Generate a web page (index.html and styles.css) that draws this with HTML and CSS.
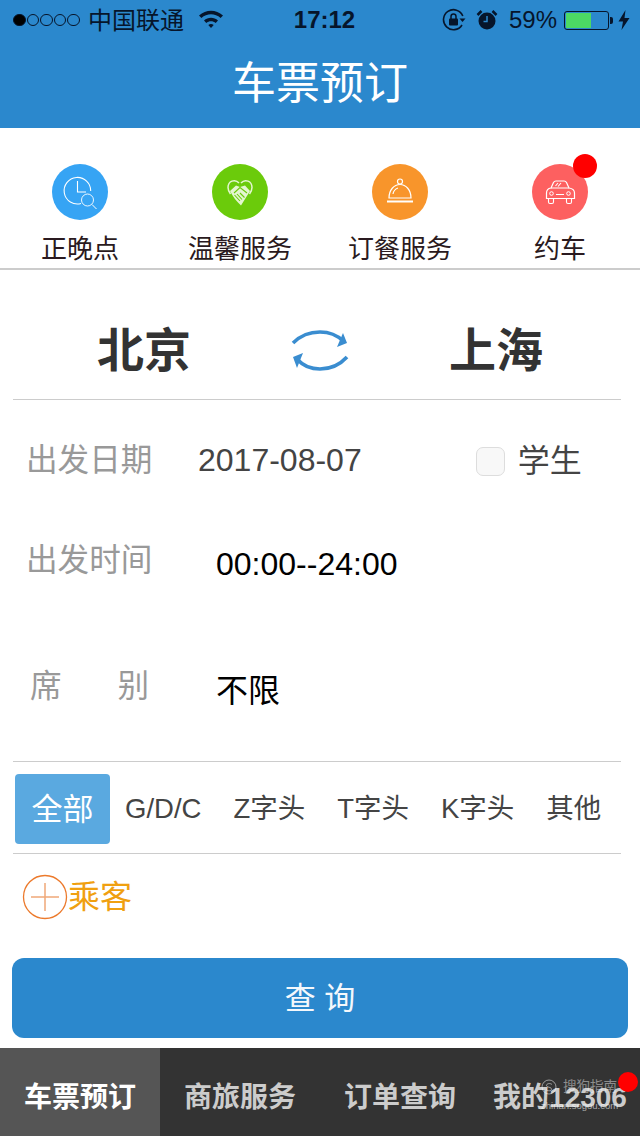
FILE: index.html
```html
<!DOCTYPE html>
<html lang="zh-CN">
  <head>
    <meta charset="UTF-8" />
    <title>车票预订</title>
    <link rel="stylesheet" href="styles.css">
  </head>
  <body>
    <div class="page">
      <header class="topbar">
        <div class="status">
          <div class="status-left">
            <span class="signal"><i class="on"></i><i></i><i></i><i></i><i></i></span>
            <span class="carrier">中国联通</span>
            <svg class="wifi" width="26" height="20" viewBox="0 0 26 20">
              <path d="M1 6.5C8 0 18 0 25 6.500L22.600 9C17 4 9 4 3.400 9Z" fill="#06152b"/>
              <path d="M6 11.500C10 7.800 16 7.800 20 11.500L17.700 14C15 11.600 11 11.600 8.300 14Z" fill="#06152b"/>
              <path d="M10.300 16C12 14.500 14 14.500 15.700 16L13 19Z" fill="#06152b"/>
            </svg>
          </div>
          <div class="time">17:12</div>
          <div class="status-right">
            <svg class="lock" width="24" height="24" viewBox="0 0 24 24">
              <path d="M20 17A10 10 0 1 1 20.800 8" fill="none" stroke="#06152b" stroke-width="1.600"/>
              <path d="M17.500 10.500h6l-3 3.500z" fill="#06152b"/>
              <rect x="7" y="10.500" width="9" height="7" rx="1" fill="#06152b"/>
              <path d="M9 11V8.500a2.500 2.500 0 0 1 5 0V11" fill="none" stroke="#06152b" stroke-width="1.500"/>
            </svg>
            <svg class="alarm" width="22" height="22" viewBox="0 0 22 22">
              <circle cx="11" cy="12" r="8.500" fill="#06152b"/>
              <path d="M1.500 6L5.500 2M20.500 6L16.500 2" stroke="#06152b" stroke-width="2.500"/>
              <path d="M11 7V12.500H7.500" fill="none" stroke="#2b88cd" stroke-width="1.500"/>
            </svg>
            <span class="percent">59%</span>
            <span class="battery"><span class="battery-level"></span></span>
            <span class="battery-tip"></span>
            <svg class="bolt" width="12" height="20" viewBox="0 0 12 20">
              <path d="M7.500 0L0.500 11.500H5L3.500 20L11.500 8H6.500Z" fill="#06152b"/>
            </svg>
          </div>
        </div>
        <h1 class="title">车票预订</h1>
      </header>

      <nav class="services">
        <a class="service">
          <svg class="service-icon" width="56" height="56" viewBox="0 0 56 56">
            <circle cx="28" cy="28" r="28" fill="#36a4f4"/>
            <path d="M29 39.500A13.300 13.300 0 1 1 38.700 27" fill="none" stroke="#fff" stroke-width="1.100"/>
            <path d="M25.500 17V28H34" fill="none" stroke="#fff" stroke-width="1.100"/>
            <circle cx="35.500" cy="36" r="6" fill="none" stroke="#fff" stroke-width=".9"/>
            <path d="M40 40.500L44.500 45" stroke="#fff" stroke-width="1"/>
          </svg>
          <span>正晚点</span>
        </a>
        <a class="service">
          <svg class="service-icon" width="56" height="56" viewBox="0 0 56 56">
            <circle cx="28" cy="28" r="28" fill="#6bcb0b"/>
            <path d="M27 19C23 14.500 16 17 16 23.500C16 26 17 28 18.500 30" fill="none" stroke="#e4f6d0" stroke-width="1.500"/>
            <path d="M29 19C33 14.500 40 17 40 23.500C40 26 39 28 37.500 30" fill="none" stroke="#e4f6d0" stroke-width="1.500"/>
            <path d="M18 27L24 21.500L28 23L33 21.500L38 27L29 41.500C25 38 21 33 18 27Z" fill="#e4f6d0"/>
            <path d="M22 29L28 23.500L35 29M22.500 31L28 37M25 30L30 35.500M28 29L32.500 33.500" fill="none" stroke="#6bcb0b" stroke-width="1.100"/>
          </svg>
          <span>温馨服务</span>
        </a>
        <a class="service">
          <svg class="service-icon" width="56" height="56" viewBox="0 0 56 56">
            <circle cx="28" cy="28" r="28" fill="#f8952b"/>
            <circle cx="28" cy="17.500" r="2.500" fill="none" stroke="#fff" stroke-width="1.200"/>
            <path d="M17 34C17 26 22 20.500 28 20.500C34 20.500 39 26 39 34Z" fill="none" stroke="#fff" stroke-width="1.200"/>
            <path d="M21 30C21.500 27 23 25 26 24" fill="none" stroke="#fff" stroke-width="1.200"/>
            <path d="M15 37.500H41" stroke="#fff" stroke-width="2"/>
          </svg>
          <span>订餐服务</span>
        </a>
        <a class="service">
          <span class="badge-wrap">
            <svg class="service-icon" width="56" height="56" viewBox="0 0 56 56">
              <circle cx="28" cy="28" r="28" fill="#fd6060"/>
              <path d="M19 24L21.500 18.500C22 17.500 23 17 24 17H32C33 17 34 17.500 34.500 18.500L37 24C40.500 24.500 42.500 26.500 42.500 29V34.500H14.500V29C14.500 26.500 15.500 24.500 19 24Z" fill="none" stroke="#fff" stroke-width="1.200"/>
              <path d="M19 24H37M16.500 35V38C16.500 39 17 39.500 18 39.500H20C21 39.500 21.500 39 21.500 38V35M34.500 35V38C34.500 39 35 39.500 36 39.500H38C39 39.500 39.500 39 39.500 38V35M24 30.500H32M23.500 22L26 19M26 22.500L29 19" fill="none" stroke="#fff" stroke-width="1.100"/>
              <circle cx="19.500" cy="29.500" r="1.800" fill="none" stroke="#fff" stroke-width="1"/>
              <circle cx="36.500" cy="29.500" r="1.800" fill="none" stroke="#fff" stroke-width="1"/>
            </svg>
            <i class="dot dot-service"></i>
          </span>
          <span>约车</span>
        </a>
      </nav>

      <section class="booking">
        <div class="cities">
          <span class="city">北京</span>
          <svg class="swap" width="60" height="44" viewBox="0 0 60 44">
            <path d="M3 14Q14 3 30 3Q44 3 53 12" fill="none" stroke="#3a8dd0" stroke-width="3.600"/>
            <path d="M53 4L57 14L47 18Z" fill="#3a8dd0"/>
            <path d="M57 28Q46 40 30 40Q16 40 8 31" fill="none" stroke="#3a8dd0" stroke-width="3.600"/>
            <path d="M3 28L13 24L7 39Z" fill="#3a8dd0"/>
          </svg>
          <span class="city">上海</span>
        </div>

        <div class="form-row row-date">
          <span class="label">出发日期</span>
          <span class="date">2017-08-07</span>
          <label class="student"><i class="checkbox"></i><span>学生</span></label>
        </div>
        <div class="form-row row-time">
          <span class="label">出发时间</span>
          <span class="value">00:00--24:00</span>
        </div>
        <div class="form-row row-seat">
          <span class="label label-seat"><b>席</b><b>别</b></span>
          <span class="value value-seat">不限</span>
        </div>

        <div class="trains">
          <span class="train active">全部</span>
          <span class="train">G/D/C</span>
          <span class="train">Z字头</span>
          <span class="train">T字头</span>
          <span class="train">K字头</span>
          <span class="train">其他</span>
        </div>

        <div class="passenger">
          <svg width="46" height="46" viewBox="0 0 46 46">
            <circle cx="23" cy="23" r="21.500" fill="none" stroke="#ec7a2c" stroke-width="1.300"/>
            <path d="M9 23H37M23 9V37" stroke="#f0a878" stroke-width="1.500"/>
          </svg>
          <span>乘客</span>
        </div>

        <button class="search">查 询</button>
      </section>

      <footer class="tabbar">
        <a class="tab current">车票预订</a>
        <a class="tab">商旅服务</a>
        <a class="tab">订单查询</a>
        <a class="tab">我的12306</a>
        <i class="dot dot-tab"></i>
        <div class="watermark">
          <svg width="16" height="16" viewBox="0 0 16 16">
            <circle cx="8" cy="8" r="7" fill="none" stroke="#fff" stroke-opacity=".5"/>
            <path d="M11 5.500C9 3.800 5.500 4.500 5.500 6.500C5.500 9 10.500 7.500 10.500 10C10.500 12 7 12.500 5 10.500" fill="none" stroke="#fff" stroke-opacity=".5"/>
          </svg>
          <span class="wm-name">搜狗指南</span>
          <small class="wm-url">zhinan.sogou.com</small>
        </div>
      </footer>
    </div>
  </body>
</html>
```

FILE: styles.css
```css
* {
  box-sizing: border-box;
}
body {
  margin: 0;
  font-family: "Liberation Sans", "Noto Sans CJK SC", sans-serif;
  background-color: #fff;
}
.page {
  width: 640px;
  height: 1136px;
  overflow: hidden;
  display: flex;
  flex-direction: column;
}
.topbar {
  height: 128px;
  background-color: #2b88cd;
}
.status {
  height: 40px;
  padding: 0 10px 0 13px;
  display: flex;
  align-items: center;
  justify-content: space-between;
  position: relative;
  font-size: 24px;
  color: #06152b;
}
.status-left,
.status-right {
  display: flex;
  align-items: center;
}
.signal {
  display: flex;
  gap: 1px;
  margin-right: 8px;
}
.signal i {
  width: 12.600px;
  height: 12.600px;
  border: 1px solid #06152b;
  border-radius: 50%;
}
.signal i.on {
  background-color: #000;
}
.carrier {
  margin-top: -4px;
}
.wifi {
  margin-left: 14px;
  margin-top: -2px;
}
.time {
  position: absolute;
  left: 9px;
  right: 0;
  text-align: center;
  font-weight: 700;
}
.lock {
  margin-right: 10px;
}
.alarm {
  margin-right: 11px;
}
.percent {
  margin-right: 7px;
}
.battery {
  width: 45px;
  height: 19px;
  border: 1px solid #06152b;
  border-radius: 3px;
  padding: 1px;
}
.battery-level {
  display: block;
  width: 25px;
  height: 100%;
  background-color: #4cd964;
}
.battery-tip {
  width: 3px;
  height: 7px;
  margin-left: 1px;
  background-color: #06152b;
  border-radius: 0 2px 2px 0;
}
.bolt {
  margin-left: 5px;
}
.title {
  margin: 0;
  height: 88px;
  line-height: 87px;
  text-align: center;
  font-size: 44px;
  font-weight: 400;
  color: #fff;
}
.services {
  height: 142px;
  padding-top: 36px;
  display: grid;
  grid-template-columns: repeat(4, 160px);
  border-bottom: 2px solid #ccc;
}
.service {
  display: flex;
  flex-direction: column;
  align-items: center;
  font-size: 26px;
  line-height: 34px;
  color: #2a1a20;
}
.service-icon {
  display: block;
  margin-bottom: 12px;
}
.badge-wrap {
  position: relative;
}
.dot {
  position: absolute;
  border-radius: 50%;
  background-color: #f00;
}
.dot-service {
  width: 24px;
  height: 24px;
  top: -10px;
  right: -9px;
}
.booking {
  flex: 1;
  padding: 0 19px 0 13px;
}
.cities {
  height: 130px;
  padding: 29px 78px 0 84px;
  display: flex;
  align-items: center;
  justify-content: space-between;
  border-bottom: 1px solid #ccc;
}
.city {
  margin-top: -6px;
  font-size: 47px;
  font-weight: 700;
  color: #333;
}
.swap {
  margin-top: 4px;
}
.form-row {
  display: flex;
  align-items: center;
  padding-left: 13px;
  line-height: 40px;
}
.label {
  width: 126px;
  font-size: 31.600px;
  white-space: nowrap;
  color: #999;
  flex-shrink: 0;
}
.row-date {
  height: 120px;
}
.date {
  margin-left: 46px;
  font-size: 32px;
  color: #444;
}
.student {
  display: flex;
  align-items: center;
  margin-left: 114px;
  font-size: 32px;
  color: #444;
}
.checkbox {
  width: 29px;
  height: 29px;
  margin: 2px 13px 0 0;
  border: 1px solid #ddd;
  border-radius: 7px;
  background-color: #f8f8f8;
}
.student span {
  margin-top: 2px;
}
.row-time {
  height: 80px;
}
.value {
  margin: 8px 0 0 64px;
  font-size: 32px;
  color: #000;
}
.value-seat {
  margin-top: 8px;
}
.row-seat {
  height: 80px;
  margin-top: 47px;
}
.label-seat {
  display: flex;
  justify-content: space-between;
  padding: 0 3px 0 4px;
  margin-top: -2px;
}
.label-seat b {
  font-weight: 400;
}
.trains {
  margin-top: 34px;
  height: 93px;
  padding-left: 2px;
  display: flex;
  align-items: center;
  border-top: 1px solid #ccc;
  border-bottom: 1px solid #ccc;
  font-size: 27.500px;
  line-height: 40px;
  color: #444;
}
.train {
  flex-shrink: 0;
  margin: 2px 32px 0 0;
}
.train.active {
  width: 95px;
  height: 70px;
  line-height: 72px;
  margin: 2px 15px 0 0;
  text-align: center;
  font-size: 31px;
  color: #fff;
  background-color: #5aa9e0;
  border-radius: 4px;
}
.passenger {
  height: 86px;
  padding: 0 0 0 9px;
  display: flex;
  align-items: center;
  font-size: 32px;
  line-height: 40px;
  color: #f0a010;
}
.search {
  display: block;
  width: 616px;
  height: 80px;
  margin: 18px 0 0 -1px;
  padding-bottom: 6px;
  border: none;
  border-radius: 12px;
  background-color: #2b88cd;
  color: #f4f8fc;
  font-family: inherit;
  font-size: 31px;
}
.tabbar {
  height: 88px;
  position: relative;
  display: grid;
  grid-template-columns: repeat(4, 160px);
  background-color: #333;
}
.tab {
  line-height: 100px;
  text-align: center;
  white-space: nowrap;
  font-size: 28px;
  font-weight: 700;
  color: #ccc;
}
.tab.current {
  background-color: #555;
  color: #fff;
}
.dot-tab {
  width: 20px;
  height: 20px;
  top: 24px;
  right: 2px;
}
.watermark {
  position: absolute;
  left: 541px;
  top: 30px;
  width: 78px;
  color: rgba(255, 255, 255, 0.45);
}
.watermark svg {
  position: absolute;
  left: 0;
  top: 1px;
}
.wm-name {
  position: absolute;
  left: 22px;
  top: 0;
  font-size: 13.500px;
  line-height: 18px;
  white-space: nowrap;
}
.wm-url {
  position: absolute;
  left: 0;
  top: 22px;
  font-size: 9.500px;
  line-height: 12px;
  white-space: nowrap;
  color: rgba(255, 255, 255, 0.6);
}
```
